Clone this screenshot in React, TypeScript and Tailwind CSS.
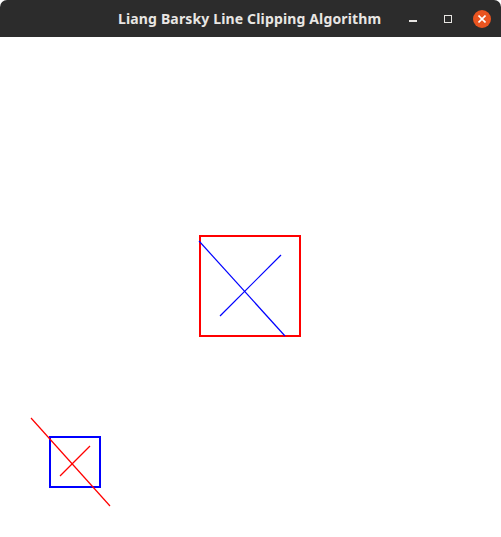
import React from 'react';

export default function App() {
    return (
        <div className="w-[501px] h-[537px] flex flex-col bg-white overflow-hidden">
            {/* window title bar */}
            <header className="h-[37px] shrink-0 flex items-center bg-[#2c2c2c] rounded-t-[7px] font-['Noto_Sans',sans-serif]">
                <h1 className="pl-[118px] text-[14px] font-bold text-[#e8e6e3] m-0 tracking-[0.15px] whitespace-nowrap">
                    Liang Barsky Line Clipping Algorithm
                </h1>
                <div className="ml-auto flex items-center pr-[10px]">
                    <div className="w-[8px] h-[2px] mt-[5px] bg-[#e8e6e3]" />
                    <div className="w-[8px] h-[8px] border border-[#e8e6e3] ml-[27px]" />
                    <div className="w-[18px] h-[18px] rounded-full bg-[#e95420] ml-[21px] flex items-center justify-center">
                        <svg width="8" height="8" viewBox="0 0 8 8">
                            <path d="M0.5 0.5 L7.5 7.5 M7.5 0.5 L0.5 7.5" stroke="#ffffff" strokeWidth="1.6" />
                        </svg>
                    </div>
                </div>
            </header>

            {/* drawing area */}
            <main className="flex-1 min-h-0">
                <svg width="501" height="500" viewBox="0 0 501 500" shapeRendering="crispEdges">
                    <rect x="200" y="199" width="100" height="100" fill="none" stroke="#ff0000" strokeWidth="2" />
                    <line x1="199" y1="204" x2="285" y2="299" stroke="#0000ff" strokeWidth="1.2" shapeRendering="auto" />
                    <line x1="220" y1="279" x2="281" y2="218" stroke="#0000ff" strokeWidth="1.2" shapeRendering="auto" />

                    <rect x="50" y="400" width="50" height="50" fill="none" stroke="#0000ff" strokeWidth="2" />
                    <line x1="31" y1="381" x2="110" y2="469" stroke="#ff0000" strokeWidth="1.2" shapeRendering="auto" />
                    <line x1="60" y1="439" x2="90" y2="409" stroke="#ff0000" strokeWidth="1.2" shapeRendering="auto" />
                </svg>
            </main>
        </div>
    );
}
